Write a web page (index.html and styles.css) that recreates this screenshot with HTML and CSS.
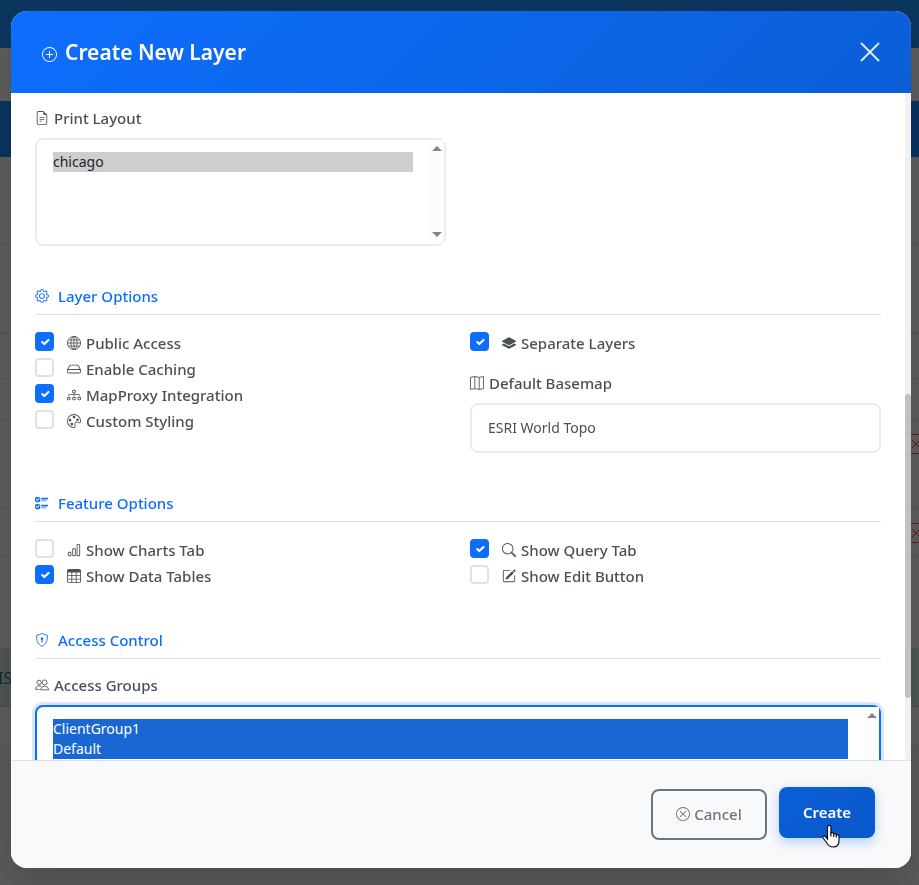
FILE: index.html
```html
<!DOCTYPE html>
<html lang="en">
<head>
<meta charset="utf-8">
<title>Create New Layer</title>
<link rel="stylesheet" href="styles.css">
</head>
<body>
<div class="backdrop" aria-hidden="true">
  <div class="bar topbar"></div>
  <div class="bar crumbs"></div>
  <div class="bar gap"></div>
  <div class="bar heading"></div>
  <div class="bar row-a"></div>
  <div class="bar row-b"></div>
  <div class="bar row-c"></div>
  <div class="bar row-c"></div>
  <div class="bar row-d"><span class="del"><svg viewBox="0 0 10 10"><path d="M1 1l8 8M9 1L1 9"/></svg></span></div>
  <div class="bar row-e"><span class="del"><svg viewBox="0 0 10 10"><path d="M1 1l8 8M9 1L1 9"/></svg></span></div>
  <div class="bar row-f"></div>
  <div class="bar status"><span>IS</span></div>
  <div class="bar row-g"></div>
  <div class="bar rest"></div>
</div>

<main class="stage">
<form class="modal" role="dialog" aria-labelledby="title">
  <header class="modal-header">
    <h1 class="modal-title" id="title">
      <svg class="icon" viewBox="0 0 16 16"><path d="M8 15A7 7 0 1 1 8 1a7 7 0 0 1 0 14m0 1A8 8 0 1 0 8 0a8 8 0 0 0 0 16"/><path d="M8 4a.5.5 0 0 1 .5.5v3h3a.5.5 0 0 1 0 1h-3v3a.5.5 0 0 1-1 0v-3h-3a.5.5 0 0 1 0-1h3v-3A.5.5 0 0 1 8 4"/></svg>
      Create New Layer
    </h1>
    <button class="close" type="button" aria-label="Close"><svg viewBox="0 0 20 20"><path d="M1 1l18 18M19 1L1 19"/></svg></button>
  </header>

  <div class="modal-body">
    <div class="content">
      <section class="grid print">
        <div class="field">
          <label class="label" for="print"><svg class="icon" viewBox="0 0 16 16"><path d="M5.500 7a.5.5 0 0 0 0 1h5a.5.5 0 0 0 0-1zM5 9.500a.5.5 0 0 1 .5-.5h5a.5.5 0 0 1 0 1h-5a.5.5 0 0 1-.5-.5m0 2a.5.5 0 0 1 .5-.5h2a.5.5 0 0 1 0 1h-2a.5.5 0 0 1-.5-.5"/><path d="M9.500 0H4a2 2 0 0 0-2 2v12a2 2 0 0 0 2 2h8a2 2 0 0 0 2-2V4.500zm0 1v2A1.500 1.500 0 0 0 11 4.500h2V14a1 1 0 0 1-1 1H4a1 1 0 0 1-1-1V2a1 1 0 0 1 1-1z"/></svg>Print Layout</label>
          <div class="listwrap">
            <select class="list" id="print" multiple><option selected>chicago</option></select>
            <div class="track"><i class="up"></i><i class="down"></i></div>
          </div>
        </div>
      </section>

      <section class="section">
        <h2 class="section-title"><svg class="icon" viewBox="0 0 16 16"><path d="M8 4.754a3.246 3.246 0 1 0 0 6.492 3.246 3.246 0 0 0 0-6.492M5.754 8a2.246 2.246 0 1 1 4.492 0 2.246 2.246 0 0 1-4.492 0"/><path d="M9.796 1.343c-.527-1.790-3.065-1.790-3.592 0l-.094.319a.873.873 0 0 1-1.255.520l-.292-.160c-1.640-.892-3.433.902-2.540 2.541l.159.292a.873.873 0 0 1-.520 1.255l-.319.094c-1.790.527-1.790 3.065 0 3.592l.319.094a.873.873 0 0 1 .520 1.255l-.160.292c-.892 1.640.901 3.434 2.541 2.540l.292-.159a.873.873 0 0 1 1.255.520l.094.319c.527 1.790 3.065 1.790 3.592 0l.094-.319a.873.873 0 0 1 1.255-.520l.292.160c1.640.893 3.434-.902 2.540-2.541l-.159-.292a.873.873 0 0 1 .520-1.255l.319-.094c1.790-.527 1.790-3.065 0-3.592l-.319-.094a.873.873 0 0 1-.520-1.255l.160-.292c.893-1.640-.902-3.433-2.541-2.540l-.292.159a.873.873 0 0 1-1.255-.520zm-2.633.283c.246-.835 1.428-.835 1.674 0l.094.319a1.873 1.873 0 0 0 2.693 1.115l.291-.160c.764-.415 1.600.420 1.184 1.185l-.159.292a1.873 1.873 0 0 0 1.116 2.692l.318.094c.835.246.835 1.428 0 1.674l-.319.094a1.873 1.873 0 0 0-1.115 2.693l.160.291c.415.764-.420 1.600-1.185 1.184l-.291-.159a1.873 1.873 0 0 0-2.693 1.116l-.094.318c-.246.835-1.428.835-1.674 0l-.094-.319a1.873 1.873 0 0 0-2.692-1.115l-.292.160c-.764.415-1.600-.420-1.184-1.185l.159-.291A1.873 1.873 0 0 0 1.945 8.930l-.319-.094c-.835-.246-.835-1.428 0-1.674l.319-.094A1.873 1.873 0 0 0 3.060 4.377l-.160-.292c-.415-.764.420-1.600 1.185-1.184l.292.159a1.873 1.873 0 0 0 2.692-1.115z"/></svg>Layer Options</h2>
        <div class="grid">
          <div class="checks">
            <label class="check"><input type="checkbox" checked><span><svg class="icon line" viewBox="0 0 16 16"><circle cx="8" cy="8" r="7.500"/><ellipse cx="8" cy="8" rx="3.600" ry="7.500"/><path d="M8 .5v15M.5 8h15M1.700 4.500h12.600M1.700 11.500h12.600"/></svg>Public Access</span></label>
            <label class="check"><input type="checkbox"><span><svg class="icon" viewBox="0 0 16 16"><path d="M16 11a2 2 0 0 1-2 2H2a2 2 0 0 1-2-2V9.510c0-.418.105-.830.305-1.197l2.472-4.531A1.500 1.500 0 0 1 4.094 3h7.812a1.500 1.500 0 0 1 1.317.782l2.472 4.530c.200.368.305.780.305 1.198zM3.655 4.260 1.592 8.043Q1.790 8 2 8h12q.210 0 .408.042L12.345 4.260a.5.5 0 0 0-.439-.260H4.094a.5.5 0 0 0-.440.260zM1 10v1a1 1 0 0 0 1 1h12a1 1 0 0 0 1-1v-1a1 1 0 0 0-1-1H2a1 1 0 0 0-1 1"/></svg>Enable Caching</span></label>
            <label class="check"><input type="checkbox" checked><span><svg class="icon" viewBox="0 0 16 16"><path fill-rule="evenodd" d="M6 3.500A1.500 1.500 0 0 1 7.500 2h1A1.500 1.500 0 0 1 10 3.500v1A1.500 1.500 0 0 1 8.500 6v1H14a.5.5 0 0 1 .5.5v1a.5.5 0 0 1-1 0V8h-5v.5a.5.5 0 0 1-1 0V8h-5v.5a.5.5 0 0 1-1 0v-1A.5.5 0 0 1 2 7h5.500V6A1.500 1.500 0 0 1 6 4.500zM8.500 5a.5.5 0 0 0 .5-.5v-1a.5.5 0 0 0-.5-.5h-1a.5.5 0 0 0-.5.5v1a.5.5 0 0 0 .5.5zM0 11.500A1.500 1.500 0 0 1 1.500 10h1A1.500 1.500 0 0 1 4 11.500v1A1.500 1.500 0 0 1 2.500 14h-1A1.500 1.500 0 0 1 0 12.500zm1.500-.5a.5.5 0 0 0-.5.5v1a.5.5 0 0 0 .5.5h1a.5.5 0 0 0 .5-.5v-1a.5.5 0 0 0-.5-.5zm4.500.5A1.500 1.500 0 0 1 7.500 10h1a1.500 1.500 0 0 1 1.500 1.500v1A1.500 1.500 0 0 1 8.500 14h-1A1.500 1.500 0 0 1 6 12.500zm1.500-.5a.5.5 0 0 0-.5.5v1a.5.5 0 0 0 .5.5h1a.5.5 0 0 0 .5-.5v-1a.5.5 0 0 0-.5-.5zm4.500.5a1.500 1.500 0 0 1 1.500-1.500h1a1.500 1.500 0 0 1 1.500 1.500v1a1.500 1.500 0 0 1-1.500 1.500h-1a1.500 1.500 0 0 1-1.500-1.500zm1.500-.5a.5.5 0 0 0-.5.5v1a.5.5 0 0 0 .5.5h1a.5.5 0 0 0 .5-.5v-1a.5.5 0 0 0-.5-.5z"/></svg>MapProxy Integration</span></label>
            <label class="check"><input type="checkbox"><span><svg class="icon" viewBox="0 0 16 16"><path d="M8 5a1.500 1.500 0 1 0 0-3 1.500 1.500 0 0 0 0 3m4 3a1.500 1.500 0 1 0 0-3 1.500 1.500 0 0 0 0 3M5 7a1.500 1.500 0 1 1-3 0 1.500 1.500 0 0 1 3 0m.5 6a1.500 1.500 0 1 0 0-3 1.500 1.500 0 0 0 0 3"/><path d="M16 8c0 3.150-1.866 2.585-3.567 2.070C11.420 9.763 10.465 9.473 10 10c-.603.683-.475 1.819-.351 2.920C9.826 14.495 9.996 16 8 16a8 8 0 1 1 8-8m-8 7c.611 0 .654-.171.655-.176.078-.146.124-.464.070-1.119-.014-.168-.037-.370-.061-.591-.052-.464-.112-1.005-.118-1.462-.010-.707.083-1.610.704-2.314.369-.417.845-.578 1.272-.618.404-.038.812.026 1.160.104.343.077.702.186 1.025.284l.028.008c.346.105.658.199.953.266.653.148.904.083.991.024C14.717 9.380 15 9.161 15 8a7 7 0 1 0-7 7"/></svg>Custom Styling</span></label>
          </div>
          <div>
            <div class="checks">
              <label class="check"><input type="checkbox" checked><span><svg class="icon" viewBox="0 0 16 16"><path d="M7.765 1.559a.5.5 0 0 1 .470 0l7.500 4a.5.5 0 0 1 0 .882l-7.500 4a.5.5 0 0 1-.470 0l-7.500-4a.5.5 0 0 1 0-.882z"/><path d="m2.125 8.567-1.860.992a.5.5 0 0 0 0 .882l7.500 4a.5.5 0 0 0 .470 0l7.500-4a.5.5 0 0 0 0-.882l-1.860-.992-5.170 2.756a1.500 1.500 0 0 1-1.410 0z"/></svg>Separate Layers</span></label>
            </div>
            <div class="field basemap">
              <label class="label" for="basemap"><svg class="icon line" viewBox="0 0 16 16"><path d="M.5 1.600 5.500.6l5 1 5-1v13.800l-5 1-5-1-5 1zM5.500.6v13.800M10.500 1.600v13.800"/></svg>Default Basemap</label>
              <select class="drop" id="basemap"><option>ESRI World Topo</option></select>
            </div>
          </div>
        </div>
      </section>

      <section class="section">
        <h2 class="section-title"><svg class="icon" viewBox="0 0 16 16"><path d="M7 2.500a.5.5 0 0 1 .5-.5h7a.5.5 0 0 1 .5.5v1a.5.5 0 0 1-.5.5h-7a.5.5 0 0 1-.5-.5zM2 1a2 2 0 0 0-2 2v2a2 2 0 0 0 2 2h2a2 2 0 0 0 2-2V3a2 2 0 0 0-2-2zm0 8a2 2 0 0 0-2 2v2a2 2 0 0 0 2 2h2a2 2 0 0 0 2-2v-2a2 2 0 0 0-2-2zm.854-3.646a.5.5 0 0 1-.708 0l-1-1a.5.5 0 1 1 .708-.708l.646.647 1.646-1.647a.5.5 0 1 1 .708.708zm0 8a.5.5 0 0 1-.708 0l-1-1a.5.5 0 0 1 .708-.708l.646.647 1.646-1.647a.5.5 0 0 1 .708.708zM7 10.500a.5.5 0 0 1 .5-.5h7a.5.5 0 0 1 .5.5v1a.5.5 0 0 1-.5.5h-7a.5.5 0 0 1-.5-.5zm0-5a.5.5 0 0 1 .5-.5h5a.5.5 0 0 1 0 1h-5a.5.5 0 0 1-.5-.5m0 8a.5.5 0 0 1 .5-.5h5a.5.5 0 0 1 0 1h-5a.5.5 0 0 1-.5-.5"/></svg>Feature Options</h2>
        <div class="grid">
          <div class="checks">
            <label class="check"><input type="checkbox"><span><svg class="icon" viewBox="0 0 16 16"><path d="M4 11H2v3h2zm5-4H7v7h2zm5-5v12h-2V2zm-2-1a1 1 0 0 0-1 1v12a1 1 0 0 0 1 1h2a1 1 0 0 0 1-1V2a1 1 0 0 0-1-1zM6 7a1 1 0 0 1 1-1h2a1 1 0 0 1 1 1v7a1 1 0 0 1-1 1H7a1 1 0 0 1-1-1zm-5 4a1 1 0 0 1 1-1h2a1 1 0 0 1 1 1v3a1 1 0 0 1-1 1H2a1 1 0 0 1-1-1z"/></svg>Show Charts Tab</span></label>
            <label class="check"><input type="checkbox" checked><span><svg class="icon" viewBox="0 0 16 16"><path d="M0 2a2 2 0 0 1 2-2h12a2 2 0 0 1 2 2v12a2 2 0 0 1-2 2H2a2 2 0 0 1-2-2zm15 2h-4v3h4zm0 4h-4v3h4zm0 4h-4v3h3a1 1 0 0 0 1-1zm-5 3v-3H6v3zm-5 0v-3H1v2a1 1 0 0 0 1 1zm-4-4h4V8H1zm0-4h4V4H1zm5-3v3h4V4zm4 4H6v3h4z"/></svg>Show Data Tables</span></label>
          </div>
          <div class="checks">
            <label class="check"><input type="checkbox" checked><span><svg class="icon" viewBox="0 0 16 16"><path d="M11.742 10.344a6.500 6.500 0 1 0-1.397 1.398h-.001q.044.060.098.115l3.850 3.850a1 1 0 0 0 1.415-1.414l-3.850-3.850a1 1 0 0 0-.115-.100zM12 6.500a5.500 5.500 0 1 1-11 0 5.500 5.500 0 0 1 11 0"/></svg>Show Query Tab</span></label>
            <label class="check"><input type="checkbox"><span><svg class="icon" viewBox="0 0 16 16"><path d="M15.502 1.940a.5.5 0 0 1 0 .706L14.459 3.690l-2-2L13.502.646a.5.5 0 0 1 .707 0l1.293 1.293zm-1.750 2.456-2-2L4.939 9.210a.5.5 0 0 0-.121.196l-.805 2.414a.250.250 0 0 0 .316.316l2.414-.805a.5.5 0 0 0 .196-.120l6.813-6.814z"/><path d="M1 13.500A1.500 1.500 0 0 0 2.500 15h11a1.500 1.500 0 0 0 1.500-1.500v-6a.5.5 0 0 0-1 0v6a.5.5 0 0 1-.5.5h-11a.5.5 0 0 1-.5-.5v-11a.5.5 0 0 1 .5-.5H9a.5.5 0 0 0 0-1H2.500A1.500 1.500 0 0 0 1 2.500z"/></svg>Show Edit Button</span></label>
          </div>
        </div>
      </section>

      <section class="section">
        <h2 class="section-title"><svg class="icon" viewBox="0 0 16 16"><path class="thin" d="M8 .5c1.600.8 3.900 1.600 6 2 .8 5.800-1 9.700-6 13-5-3.300-6.800-7.200-6-13 2.100-.4 4.400-1.200 6-2z"/><path d="M9.500 6.500a1.500 1.500 0 0 1-1 1.415l.385 1.990a.5.5 0 0 1-.491.595h-.788a.5.5 0 0 1-.490-.595l.384-1.990a1.500 1.500 0 1 1 2-1.415"/></svg>Access Control</h2>
        <div class="field">
          <label class="label groups-label" for="groups"><svg class="icon line" viewBox="0 0 16 16"><circle cx="4.700" cy="5" r="2.500"/><circle cx="11" cy="5" r="2.800"/><path d="M6.500 13.500h9c0-2.500-1.800-4-4.500-4s-4.500 1.500-4.500 4zM7 9.400c-3.500-1.300-6.500.6-6.500 3.600h4.500"/></svg>Access Groups</label>
          <div class="listwrap">
            <select class="list focused" id="groups" multiple><option selected>ClientGroup1</option><option selected>Default</option></select>
            <div class="track"><i class="up"></i></div>
          </div>
        </div>
      </section>
    </div>
    <div class="scroll"><div class="thumb"></div></div>
  </div>

  <footer class="modal-footer">
    <button class="btn cancel" type="button"><svg class="icon" viewBox="0 0 16 16"><path d="M8 15A7 7 0 1 1 8 1a7 7 0 0 1 0 14m0 1A8 8 0 1 0 8 0a8 8 0 0 0 0 16"/><path d="M4.646 4.646a.5.5 0 0 1 .708 0L8 7.293l2.646-2.647a.5.5 0 0 1 .708.708L8.707 8l2.647 2.646a.5.5 0 0 1-.708.708L8 8.707l-2.646 2.647a.5.5 0 0 1-.708-.708L7.293 8 4.646 5.354a.5.5 0 0 1 0-.708"/></svg>Cancel</button>
    <button class="btn create" type="button">Create
      <svg class="cursor" viewBox="0 0 18 24"><path d="M5.500 15V3a1.700 1.700 0 0 1 3.400 0v6c1-.8 2.600-.3 2.800.8 1-.6 2.400-.1 2.600 1 1.200-.4 2.700.3 2.700 1.800v4.200c0 3.700-2.200 6.200-5.800 6.200-3.100 0-4.600-1.200-6-3.500L1 13.800c-.7-1.500 1.200-2.600 2.400-1.300z"/><path d="M8.900 8.500v4M11.700 9.500v3.500M14.300 10.500v3"/></svg>
    </button>
  </footer>
</form>
</main>
</body>
</html>
```
FILE: styles.css
```css
* { box-sizing: border-box; }

body {
  margin: 0;
  color: #495057;
  font: 15px/20px "Noto Sans", "Open Sans", sans-serif;
  background: #5f5f5f;
}

.backdrop {
  position: fixed;
  inset: 0;
  display: flex;
  flex-direction: column;
}
.bar { flex: none; background: #5f5f5f; border-bottom: 1px solid #555; }
.topbar { height: 48px; background: #0c3760; border: 0; }
.crumbs { height: 43px; background: #5e605e; border-color: #646464; }
.gap { height: 10px; border: 0; }
.heading { height: 56px; background: #0a3562; border: 0; }
.row-a { height: 87px; }
.row-b { height: 90px; border-bottom-width: 2px; }
.row-c { height: 41px; }
.row-d { height: 86px; }
.row-e { height: 46px; }
.row-f { height: 90px; }
.row-b + .row-c { height: 45px; }
.status { height: 58px; background: #4f5853; border-color: #46524b; color: #0b2d3a; }
.status span { display: block; padding: 19px 0; text-indent: -2px; font-size: 16px; }
.row-g { height: 39px; }
.rest { flex: 1; background: #5a5c5a; border: 0; }
.row-d { height: 89px; }
.row-e { height: 47px; }
.row-f { height: 93px; }
.row-d, .row-e { display: flex; justify-content: flex-end; align-items: flex-start; }
.del {
  width: 8px;
  height: 20px;
  margin-top: 14px;
  border: solid #6b1621;
  border-width: 1px 0;
  overflow: hidden;
}
.del svg { display: block; width: 10px; height: 18px; fill: none; stroke: #6b1621; }

.stage {
  position: relative;
  display: flex;
  height: 100vh;
  padding: 11px 8px 17px 11px;
}
.modal {
  flex: 1;
  display: flex;
  flex-direction: column;
  min-width: 0;
  overflow: hidden;
  background: #fff;
  border-radius: 16px;
  box-shadow: 0 16px 48px rgba(0, 0, 0, .18);
}

.icon {
  flex: none;
  width: 14px;
  height: 14px;
  fill: currentColor;
}
.icon.line, .icon .thin { fill: none; stroke: currentColor; }

.modal-header {
  flex: none;
  display: flex;
  align-items: center;
  justify-content: space-between;
  padding: 24px 31px;
  color: #fff;
  background: linear-gradient(135deg, #0d6efd, #0b5ed7);
}
.modal-title {
  display: flex;
  align-items: center;
  gap: 8px;
  margin: 0;
  font-size: 21px;
  line-height: 34px;
  font-weight: 600;
}
.modal-title .icon { width: 15px; height: 15px; margin-top: 4px; }
.close {
  display: flex;
  padding: 0;
  border: 0;
  background: none;
}
.close svg { width: 20px; height: 20px; fill: none; stroke: #dbe8fd; stroke-width: 2; }

.modal-body { flex: 1; display: flex; min-height: 0; overflow: hidden; }
.content { flex: 1; min-width: 0; padding: 15px 24px 0; }
.scroll { width: 6px; padding-top: 301px; background: #f1f1f1; border-radius: 3px; }
.thumb { height: 304px; background: #c1c1c1; border-radius: 3px; }

.grid { display: grid; grid-template-columns: 1fr 1fr; gap: 24px; }
.label {
  display: flex;
  align-items: center;
  gap: 5px;
  margin-bottom: 10px;
  font-weight: 500;
}
.listwrap { position: relative; }
.list {
  display: block;
  width: 100%;
  height: 108px;
  padding: 12px 31px 12px 16px;
  border: 2px solid #e9ecef;
  border-radius: 8px;
  outline: 0;
  overflow: hidden;
  font: 14px/20px "Noto Sans", "Open Sans", sans-serif;
  background: #fff;
}
.list option { min-height: 20px; padding: 0; line-height: 20px; color: #212529; }
.list option:checked { color: #212529; background: #cecece linear-gradient(#cecece, #cecece); }
.list.focused { border-color: #0d6efd; box-shadow: 0 0 0 3px #d9e7fe; }
.list.focused option:checked { color: #fff; background: #1967d2 linear-gradient(#1967d2, #1967d2); }
.track {
  position: absolute;
  inset: 2px 2px 2px auto;
  display: flex;
  flex-direction: column;
  justify-content: space-between;
  align-items: center;
  width: 15px;
  padding: 6px 0 7px;
  background: #fcfcfc;
}
.up, .down { border: 5px solid transparent; }
.up { border-top: 0; border-bottom-color: #858585; }
.down { border-bottom: 0; border-top-color: #858585; }

.section { padding-top: 40px; }
.section-title {
  display: flex;
  align-items: center;
  gap: 9px;
  margin: 0 0 16px;
  padding-bottom: 8px;
  border-bottom: 1px solid #dee2e6;
  color: #0d6efd;
  font-size: 15px;
  line-height: 20px;
  font-weight: 500;
}

.check {
  display: flex;
  gap: 13px;
  height: 26px;
  font-weight: 500;
}
.check input {
  appearance: none;
  flex: none;
  width: 19px;
  height: 19px;
  margin: 1px 0 0;
  border: 2px solid #dee2e6;
  border-radius: 4px;
  background: #fff;
}
.check input:checked {
  border-color: #0d6efd;
  background: #0d6efd url("data:image/svg+xml,%3Csvg xmlns='http://www.w3.org/2000/svg' viewBox='0 0 20 20'%3E%3Cpath fill='none' stroke='%23fff' stroke-linecap='round' stroke-linejoin='round' stroke-width='3' d='m6 10 3 3 6-6'/%3E%3C/svg%3E") center / 14px no-repeat;
}
.check span { display: flex; align-items: center; gap: 5px; height: 20px; margin-top: 2px; }

.basemap { margin-top: 16px; }
.drop {
  appearance: none;
  display: block;
  width: 100%;
  height: 50px;
  padding: 0 16px;
  border: 2px solid #e9ecef;
  border-radius: 8px;
  color: #495057;
  font: 14px/20px "Noto Sans", "Open Sans", sans-serif;
  background: #fff;
}

.modal-footer {
  flex: none;
  display: flex;
  justify-content: flex-end;
  gap: 12px;
  height: 108px;
  padding: 26px 36px;
  border-top: 1px solid #dee2e6;
  background: #f8f9fa;
}
.btn {
  display: flex;
  align-items: center;
  justify-content: center;
  gap: 4px;
  height: 51px;
  padding: 0 0 2px;
  border-radius: 8px;
  font: 500 15px/20px "Noto Sans", "Open Sans", sans-serif;
}
.cancel {
  width: 116px;
  margin-top: 2px;
  border: 2px solid #6c757d;
  color: #6c757d;
  background: transparent;
}
.create {
  position: relative;
  width: 96px;
  border: 0;
  color: #fff;
  font-weight: 600;
  background: linear-gradient(135deg, #0b5ed7, #0a58ca);
  box-shadow: 0 4px 12px rgba(13, 110, 253, .3);
}
.cursor {
  position: absolute;
  left: 43px;
  top: 37px;
  width: 18px;
  height: 24px;
  fill: #fff;
  stroke: #111;
  stroke-width: 1.2;
}
```
